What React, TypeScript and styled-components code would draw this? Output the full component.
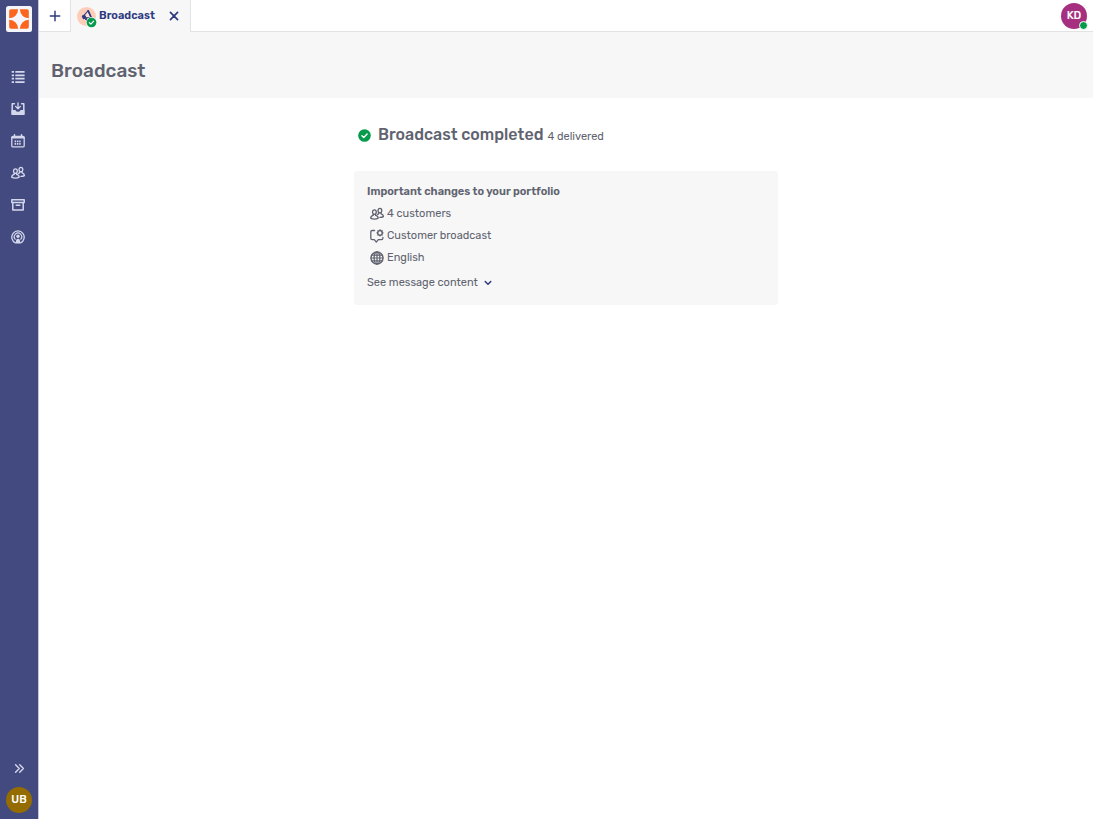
import React from 'react';
import styled, { createGlobalStyle } from 'styled-components';

const GlobalStyle = createGlobalStyle`
  *, *::before, *::after { box-sizing: border-box; }
  body {
    margin: 0;
    background: #ffffff;
    color: #60636f;
    font-family: Rubik, Inter, "Liberation Sans", sans-serif;
    font-size: 11px;
    line-height: 16px;
  }
  button { font: inherit; color: inherit; background: none; border: 0; padding: 0; cursor: pointer; }
  h1, h2, h3, p, ul { margin: 0; padding: 0; }
  ul { list-style: none; }
  svg { display: block; flex: none; }
`;

const Shell = styled.div`
  display: flex;
  min-height: 100vh;
`;

const Sidebar = styled.aside`
  flex: none;
  width: 39px;
  padding: 6px 0;
  display: flex;
  flex-direction: column;
  align-items: center;
  background: #424a80;
  border-right: 1px solid #c4c6d8;
  color: #d5d8ec;
`;

const LogoLink = styled.a`
  display: block;
  margin-bottom: 29px;
`;

const Nav = styled.nav`
  flex: 1;
  align-self: flex-start;
`;

const NavLink = styled.a`
  display: flex;
  align-items: center;
  justify-content: center;
  width: 36px;
  height: 32px;
  color: inherit;
`;

const ExpandButton = styled.button`
  display: flex;
  align-items: center;
  justify-content: center;
  width: 38px;
  height: 24px;
  margin-bottom: 7px;
`;

const Avatar = styled.button<{ $color: string }>`
  position: relative;
  width: 26px;
  height: 26px;
  border-radius: 50%;
  background: ${(p) => p.$color};
  color: #ffffff;
  font-weight: 500;
  line-height: 26px;
  text-align: center;
`;

const OnlineDot = styled.span`
  position: absolute;
  right: -1px;
  bottom: -1px;
  width: 9px;
  height: 9px;
  border: 1px solid #ffffff;
  border-radius: 50%;
  background: #069a4c;
`;

const Page = styled.div`
  flex: 1;
  min-width: 0;
`;

const TabBar = styled.div`
  display: flex;
  height: 32px;
`;

const NewTabButton = styled.button`
  display: flex;
  align-items: center;
  justify-content: center;
  width: 31px;
  border-bottom: 1px solid #e3e3e5;
  color: #2f3a80;
`;

const Tab = styled.div`
  display: flex;
  align-items: center;
  width: 121px;
  padding: 0 6px;
  border: solid #e3e3e5;
  border-width: 0 1px;
  background: #f7f7f7;
  color: #2f3a80;
`;

const TabIcon = styled.span`
  position: relative;
  display: flex;
  align-items: center;
  justify-content: center;
  width: 19px;
  height: 19px;
  margin-right: 3px;
  border-radius: 50%;
  background: #fdcdb9;
`;

const TabBadge = styled.span`
  position: absolute;
  right: -1px;
  bottom: -2px;
`;

const TabTitle = styled.span`
  flex: 1;
  font-weight: 600;
`;

const CloseButton = styled.button`
  display: flex;
  align-items: center;
  justify-content: center;
  width: 20px;
  height: 20px;
`;

const TabBarRest = styled.div`
  flex: 1;
  display: flex;
  align-items: center;
  justify-content: flex-end;
  padding: 1px 6px 0 0;
  border-bottom: 1px solid #e3e3e5;
`;

const PageHeader = styled.header`
  padding: 27px 12px 15px;
  background: #f7f7f7;
`;

const PageTitle = styled.h1`
  font-size: 19px;
  line-height: 24px;
  font-weight: 500;
`;

const Content = styled.main`
  max-width: 424px;
  margin: 0 auto;
  padding-top: 25px;
`;

const StatusLine = styled.div`
  display: flex;
  align-items: center;
  padding-left: 4px;
  margin-bottom: 24px;
`;

const StatusTitle = styled.h2`
  margin-left: 7px;
  font-size: 16px;
  line-height: 24px;
  font-weight: 500;
`;

const StatusCount = styled.span`
  margin-left: 4px;
  padding-top: 3px;
`;

const Card = styled.section`
  padding: 13px 13px 10px;
  border-radius: 3px;
  background: #f7f7f7;
`;

const CardTitle = styled.h3`
  font-size: 11px;
  line-height: 16px;
  font-weight: 600;
  margin-bottom: 3px;
`;

const DetailList = styled.ul`
  margin-bottom: 2px;
`;

const Detail = styled.li`
  display: flex;
  align-items: center;
  gap: 3px;
  height: 22px;
  padding-left: 3px;
`;

const ContentToggle = styled.button`
  display: flex;
  align-items: center;
  gap: 6px;
  height: 24px;
`;

const Icon = ({ size = 14, children }: { size?: number; children: React.ReactNode }) => (
  <svg width={size} height={size} viewBox="0 0 14 14" fill="none" stroke="currentColor" strokeWidth="1.3" strokeLinecap="round" strokeLinejoin="round" aria-hidden="true">
    {children}
  </svg>
);

const ListIcon = () => (
  <Icon>
    <path d="M4.3 1.9H13.6M4.3 5.3H13.6M4.3 8.7H13.6M4.3 12.1H13.6" strokeLinecap="butt" strokeWidth="1.8" />
    <path d="M.7 1.9H3M.7 5.3H3M.7 8.7H3M.7 12.1H3" strokeLinecap="butt" strokeWidth="1.8" />
  </Icon>
);

const InboxIcon = () => (
  <Icon>
    <path d="M3.4 1.7H1.2V12.3H12.8V1.7H10.6" strokeWidth="1.5" />
    <path d="M1.2 8.6H4.1C4.4 11 9.6 11 9.9 8.6H12.8V12.3H1.2Z" fill="currentColor" />
    <path d="M7 .8V6.6M4.6 4.4L7 6.8L9.4 4.4" />
  </Icon>
);

const CalendarIcon = () => (
  <Icon>
    <rect x=".8" y="2.3" width="12.4" height="10.6" rx="1.2" />
    <path d="M.8 3.8H13.2M3.5 .8V2.5M10.5 .8V2.5" strokeWidth="1.5" />
    <path d="M3.6 7.4H10.4M3.6 9.9H10.4" strokeDasharray="1.5 .8" strokeWidth="1.7" strokeLinecap="butt" />
  </Icon>
);

const PeopleIcon = () => (
  <Icon>
    <ellipse cx="4.4" cy="5.1" rx="1.9" ry="2.3" />
    <path d="M3.2 7.3V8.4C1.5 8.8 .7 9.5 .7 11.1C2.7 12.4 6.3 12.4 8.2 11.1C8.2 9.5 7.3 8.8 5.6 8.4V7.3" />
    <ellipse cx="9.9" cy="3.6" rx="1.9" ry="2.3" />
    <path d="M8.7 5.8V6.8L7.5 7.3M11.1 5.8V6.8C12.7 7.2 13.4 8 13.4 9.6C12.4 10.2 11.2 10.4 9.9 10.4" />
  </Icon>
);

const ArchiveIcon = () => (
  <Icon>
    <path d="M.8 1.8H13.2V4.4H.8ZM1.8 4.4V12H12.2V4.4M5.2 7.2H8.8" strokeWidth="1.5" />
  </Icon>
);

const PodcastIcon = () => (
  <Icon>
    <path d="M4.4 12.8A6.2 6.2 0 1 1 9.6 12.8" />
    <path d="M4.2 9.2A3.7 3.7 0 1 1 9.8 9.2" strokeWidth="1.2" />
    <circle cx="7" cy="6.3" r="1.7" fill="currentColor" stroke="none" />
    <path d="M4.6 13.6L5.2 9.8Q7 7.6 8.8 9.8L9.4 13.6Z" fill="currentColor" stroke="none" />
  </Icon>
);

const BroadcastBubbleIcon = () => (
  <Icon>
    <path d="M4.6 1.5H2.2C1.3 1.5 .8 2 .8 2.9V9.2C.8 10.1 1.3 10.6 2.2 10.6H4.3L6.3 13.1L8.3 10.6H11.4C12.3 10.6 12.9 10.1 12.9 9.2V8.4" />
    <circle cx="10" cy="3.9" r="2.3" strokeWidth="1.5" />
    <path d="M10 .7V1.2M10 6.6V7.2M6.8 3.9H7.2M12.8 3.9H13.2M7.8 1.7L8.1 2M12.2 1.7L11.9 2M7.8 6.1L8.1 5.8M12.2 6.1L11.9 5.8" strokeWidth="1" />
  </Icon>
);

const GlobeIcon = () => (
  <Icon>
    <circle cx="7" cy="7" r="6" strokeWidth="1.4" />
    <ellipse cx="7" cy="7" rx="2.9" ry="6" strokeWidth="1.3" />
    <path d="M7 1V13M1 7H13M1.8 4.2H12.2M1.8 9.8H12.2" strokeWidth="1.2" />
  </Icon>
);

const CheckIcon = ({ size, ring }: { size: number; ring?: boolean }) => (
  <svg width={size} height={size} viewBox="0 0 14 14" fill="none" aria-hidden="true">
    {ring && <circle cx="7" cy="7" r="7" fill="#f7f7f7" />}
    <circle cx="7" cy="7" r={ring ? 6.2 : 6.8} fill="#069a4c" />
    <path d="M4.2 7.2L6.2 9.1L9.8 5.3" stroke="#ffffff" strokeWidth="1.5" strokeLinecap="round" strokeLinejoin="round" />
  </svg>
);

const MegaphoneIcon = () => (
  <svg width="12" height="12" viewBox="0 0 14 14" fill="none" aria-hidden="true">
    <g transform="rotate(-24 7 7)" stroke="#2f3a80" strokeLinejoin="round">
      <path d="M4.8 4.6L10.6 2V10.6L4.8 8.4Z" fill="#fde0d4" strokeWidth="1.2" />
      <path d="M1.8 4.7H4.8V8.4H1.8Z" fill="#2f3a80" strokeWidth="1" />
      <path d="M3.4 8.6L4.4 11.6H6L5.4 8.8" fill="#2f3a80" strokeWidth="1" />
      <path d="M10.8 1.8V10.8" strokeWidth="1.8" strokeLinecap="round" />
    </g>
  </svg>
);

const Logo = () => (
  <svg width="26" height="26" viewBox="0 0 26 26" aria-hidden="true">
    <rect width="26" height="26" rx="2.5" fill="#f5f6fb" />
    {[0, 90, 180, 270].map((angle) => (
      <path key={angle} d="M3.2 5Q3.2 3.2 5 3.2H12.2Q11.4 11.4 3.2 12.2Z" fill="#fb651e" transform={`rotate(${angle} 13 13)`} />
    ))}
  </svg>
);

const navItems = [
  { label: 'Tasks', icon: <ListIcon /> },
  { label: 'Inbox', icon: <InboxIcon /> },
  { label: 'Calendar', icon: <CalendarIcon /> },
  { label: 'Customers', icon: <PeopleIcon /> },
  { label: 'Archive', icon: <ArchiveIcon /> },
  { label: 'Broadcasts', icon: <PodcastIcon /> },
];

const details = [
  { text: '4 customers', icon: <PeopleIcon /> },
  { text: 'Customer broadcast', icon: <BroadcastBubbleIcon /> },
  { text: 'English', icon: <GlobeIcon /> },
];

export default function App() {
  return (
    <>
      <GlobalStyle />
      <Shell>
        <Sidebar>
          <LogoLink href="#" aria-label="Home"><Logo /></LogoLink>
          <Nav>
            {navItems.map((item) => (
              <NavLink key={item.label} href="#" aria-label={item.label}>{item.icon}</NavLink>
            ))}
          </Nav>
          <ExpandButton aria-label="Expand menu">
            <Icon size={11}><path d="M2 2.3L6.7 7L2 11.7M7.3 2.3L12 7L7.3 11.7" strokeWidth="1.8" /></Icon>
          </ExpandButton>
          <Avatar $color="#946c00">UB</Avatar>
        </Sidebar>
        <Page>
          <TabBar>
            <NewTabButton aria-label="New tab">
              <Icon size={12}><path d="M7 1.5V12.5M1.5 7H12.5" strokeWidth="1.7" /></Icon>
            </NewTabButton>
            <Tab>
              <TabIcon>
                <MegaphoneIcon />
                <TabBadge><CheckIcon size={11} ring /></TabBadge>
              </TabIcon>
              <TabTitle>Broadcast</TabTitle>
              <CloseButton aria-label="Close tab">
                <Icon size={10}><path d="M2 2L12 12M12 2L2 12" strokeWidth="2.4" /></Icon>
              </CloseButton>
            </Tab>
            <TabBarRest>
              <Avatar $color="#a6307f">KD<OnlineDot /></Avatar>
            </TabBarRest>
          </TabBar>
          <PageHeader>
            <PageTitle>Broadcast</PageTitle>
          </PageHeader>
          <Content>
            <StatusLine>
              <CheckIcon size={13} />
              <StatusTitle>Broadcast completed</StatusTitle>
              <StatusCount>4 delivered</StatusCount>
            </StatusLine>
            <Card>
              <CardTitle>Important changes to your portfolio</CardTitle>
              <DetailList>
                {details.map((d) => (
                  <Detail key={d.text}>{d.icon}{d.text}</Detail>
                ))}
              </DetailList>
              <ContentToggle aria-expanded="false">
                See message content
                <svg width="8" height="6" viewBox="0 0 8 6" fill="none" stroke="#2f3a80" strokeWidth="1.5" strokeLinecap="round" strokeLinejoin="round" aria-hidden="true"><path d="M1.2 1.5L4 4.3L6.8 1.5" /></svg>
              </ContentToggle>
            </Card>
          </Content>
        </Page>
      </Shell>
    </>
  );
}
